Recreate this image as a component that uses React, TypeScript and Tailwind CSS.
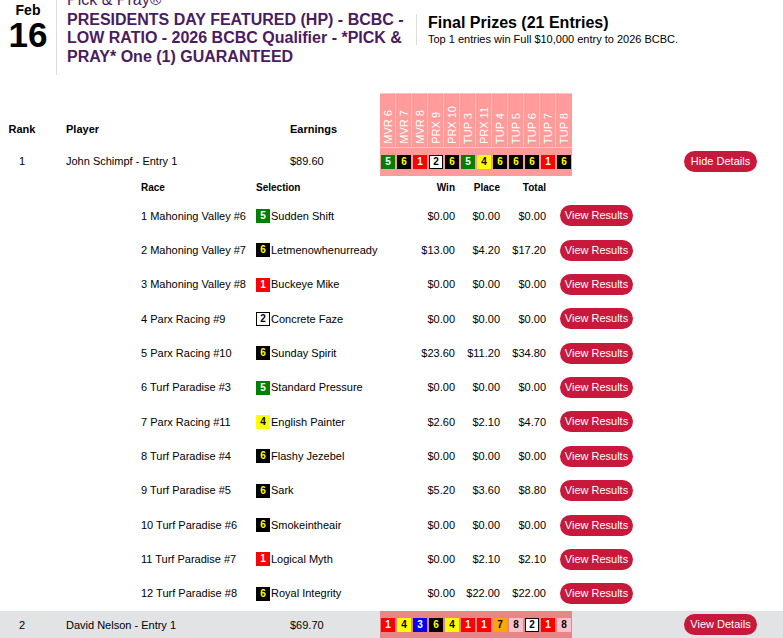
import React from "react";

type Pick = { n: number };

const pickStyle: Record<number, string> = {
  1: "bg-[#ff0000] text-white",
  2: "bg-white text-black border border-black",
  3: "bg-[#0000ff] text-white",
  4: "bg-[#ffff00] text-black",
  5: "bg-[#008000] text-white",
  6: "bg-black text-[#ffff00]",
  7: "bg-[#ffa500] text-black",
  8: "bg-[#ffc0cb] text-black",
};

const races = ["MVR 6", "MVR 7", "MVR 8", "PRX 9", "PRX 10", "TUP 3", "PRX 11", "TUP 4", "TUP 5", "TUP 6", "TUP 7", "TUP 8"];

const details = [
  { race: "1 Mahoning Valley #6", n: 5, horse: "Sudden Shift", win: "$0.00", place: "$0.00", total: "$0.00" },
  { race: "2 Mahoning Valley #7", n: 6, horse: "Letmenowhenurready", win: "$13.00", place: "$4.20", total: "$17.20" },
  { race: "3 Mahoning Valley #8", n: 1, horse: "Buckeye Mike", win: "$0.00", place: "$0.00", total: "$0.00" },
  { race: "4 Parx Racing #9", n: 2, horse: "Concrete Faze", win: "$0.00", place: "$0.00", total: "$0.00" },
  { race: "5 Parx Racing #10", n: 6, horse: "Sunday Spirit", win: "$23.60", place: "$11.20", total: "$34.80" },
  { race: "6 Turf Paradise #3", n: 5, horse: "Standard Pressure", win: "$0.00", place: "$0.00", total: "$0.00" },
  { race: "7 Parx Racing #11", n: 4, horse: "English Painter", win: "$2.60", place: "$2.10", total: "$4.70" },
  { race: "8 Turf Paradise #4", n: 6, horse: "Flashy Jezebel", win: "$0.00", place: "$0.00", total: "$0.00" },
  { race: "9 Turf Paradise #5", n: 6, horse: "Sark", win: "$5.20", place: "$3.60", total: "$8.80" },
  { race: "10 Turf Paradise #6", n: 6, horse: "Smokeintheair", win: "$0.00", place: "$0.00", total: "$0.00" },
  { race: "11 Turf Paradise #7", n: 1, horse: "Logical Myth", win: "$0.00", place: "$2.10", total: "$2.10" },
  { race: "12 Turf Paradise #8", n: 6, horse: "Royal Integrity", win: "$0.00", place: "$22.00", total: "$22.00" },
];

const PickBox = ({ n }: Pick) => (
  <div className={`w-[14px] h-[14px] flex items-center justify-center text-[10px] font-bold leading-none ${pickStyle[n]}`}>
    {n}
  </div>
);

const PillButton = ({ label, className = "" }: { label: string; className?: string }) => (
  <button className={`h-[21px] rounded-full bg-[#c8183b] text-white text-[11px] leading-none ${className}`}>{label}</button>
);

const PicksRow = ({ picks, bg }: { picks: number[]; bg: string }) => (
  <div className={`w-[192px] h-full flex items-center ${bg}`}>
    {picks.map((n, i) => (
      <div key={i} className="w-[16px] flex justify-center">
        <PickBox n={n} />
      </div>
    ))}
  </div>
);

export default function App() {
  return (
    <div className="w-[783px] h-[638px] overflow-hidden bg-white text-black font-['Liberation_Sans',Arial,sans-serif]">
      {/* event header */}
      <div className="flex -mt-[9px]">
        <div className="w-[56px] flex flex-col items-center pt-[12px]">
          <div className="text-[14px] font-bold leading-[14px]">Feb</div>
          <div className="text-[35px] font-bold leading-[36px]">16</div>
        </div>
        <div className="border-l border-[#dddddd] pl-[10px] w-[360px] pb-[8px] text-[#4a1c5f] text-[16px] leading-[18.5px]">
          <div>Pick &amp; Pray®</div>
          <div className="font-bold w-[345px] leading-[18.7px] pt-px">
            PRESIDENTS DAY FEATURED (HP) - BCBC - LOW RATIO - 2026 BCBC Qualifier - *PICK &amp; PRAY* One (1) GUARANTEED
          </div>
        </div>
        <div className="mt-[23px] h-[31px] border-l border-[#dddddd] pl-[11px]">
          <div className="text-[16px] font-bold leading-[18px]">Final Prizes (21 Entries)</div>
          <div className="text-[11px] leading-[15px]">Top 1 entries win Full $10,000 entry to 2026 BCBC.</div>
        </div>
      </div>

      {/* standings header */}
      <div className="flex items-end h-[55px] mt-[18px] text-[11px] font-bold">
        <div className="w-[44px] text-center pb-[10px]">Rank</div>
        <div className="w-[246px] pl-[22px] pb-[10px]">Player</div>
        <div className="w-[90px] pb-[10px]">Earnings</div>
        <div className="w-[192px] h-full flex bg-[#ff9b9b] border-t border-b border-[#ffc4c4]">
          {races.map((r) => (
            <div key={r} className="w-[16px] h-full flex items-end justify-center pb-[3px] border-r border-[#ffbdbd] last:border-r-0">
              <span className="[writing-mode:vertical-rl] rotate-180 text-white font-normal text-[11px] leading-[14px] whitespace-nowrap">{r}</span>
            </div>
          ))}
        </div>
      </div>

      {/* entry 1 */}
      <div className="flex items-center h-[28px] text-[11px]">
        <div className="w-[44px] text-center">1</div>
        <div className="w-[246px] pl-[22px]">John Schimpf - Entry 1</div>
        <div className="w-[90px]">$89.60</div>
        <PicksRow picks={[5, 6, 1, 2, 6, 5, 4, 6, 6, 6, 1, 6]} bg="bg-[#ff9b9b]" />
        <div className="flex-1 flex justify-end pr-[26px]">
          <PillButton label="Hide Details" className="w-[73px]" />
        </div>
      </div>

      {/* details */}
      <div className="ml-[140px] text-[11px]">
        <div className="flex items-center h-[23px] font-bold text-[10px]">
          <div className="w-[116px] pl-px">Race</div>
          <div className="w-[160px]">Selection</div>
          <div className="w-[39px] text-right">Win</div>
          <div className="w-[45px] text-right">Place</div>
          <div className="w-[46px] text-right">Total</div>
        </div>
        {details.map((d) => (
          <div key={d.race} className="flex items-center h-[34.36px]">
            <div className="w-[116px] pl-px">{d.race}</div>
            <div className="w-[160px] flex items-center gap-px">
              <PickBox n={d.n} />
              <span>{d.horse}</span>
            </div>
            <div className="w-[39px] text-right">{d.win}</div>
            <div className="w-[45px] text-right">{d.place}</div>
            <div className="w-[46px] text-right">{d.total}</div>
            <PillButton label="View Results" className="w-[73px] ml-[14px]" />
          </div>
        ))}
      </div>

      {/* entry 2 */}
      <div className="flex items-center h-[28px] text-[11px] bg-[#e2e3e5]">
        <div className="w-[44px] text-center">2</div>
        <div className="w-[246px] pl-[22px]">David Nelson - Entry 1</div>
        <div className="w-[90px]">$69.70</div>
        <PicksRow picks={[1, 4, 3, 6, 4, 1, 1, 7, 8, 2, 1, 8]} bg="bg-[#e88586]" />
        <div className="flex-1 flex justify-end pr-[26px]">
          <PillButton label="View Details" className="w-[73px]" />
        </div>
      </div>
    </div>
  );
}
